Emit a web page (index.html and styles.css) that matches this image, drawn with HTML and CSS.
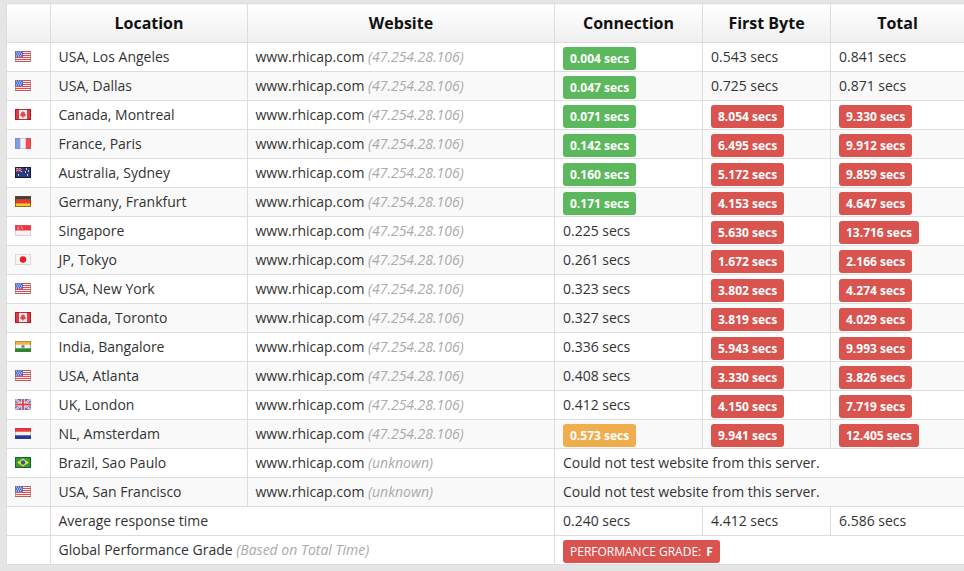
FILE: index.html
```html
<!DOCTYPE html>
<html lang="en">
<head>
<meta charset="utf-8">
<title>Response time</title>
<link rel="stylesheet" href="styles.css">
</head>
<body>
<svg class="defs" width="0" height="0" aria-hidden="true">
<defs>
<symbol id="us" viewBox="0 0 16 11"><rect width="16" height="11" fill="#f7efef"/><path d="M0 .5h16M0 2.500h16M0 4.500h16M0 6.500h16M0 8.500h16M0 10.500h16" stroke="#ee4a4e" stroke-width="1"/><rect width="8" height="6" fill="#4d6fdc"/><path d="M1 1h1M3 1h1M5 1h1M2 3h1M4 3h1M6 3h1M1 5h1M3 5h1M5 5h1" stroke="#e6ecff" stroke-width="1"/><rect x=".5" y=".5" width="15" height="10" fill="none" stroke="#8a6d6d" stroke-opacity=".55"/></symbol>
<symbol id="ca" viewBox="0 0 16 11"><rect width="16" height="11" fill="#f6eeee"/><rect width="4" height="11" fill="#e03a40"/><rect x="12" width="4" height="11" fill="#e03a40"/><path d="M8 2l1 1.400 1-.4-.3 2 1.300-.3-.6 1.500.6.500-2.500 1-.3 1.300h-.4l-.3-1.300-2.500-1 .6-.5-.6-1.500 1.300.3-.3-2 1 .4z" fill="#dc474c"/><rect x=".5" y=".5" width="15" height="10" fill="none" stroke="#b01015" stroke-opacity=".85"/></symbol>
<symbol id="fr" viewBox="0 0 16 11"><rect width="16" height="11" fill="#f2f2f4"/><rect width="5.300" height="11" fill="#7f9de4"/><rect x="10.700" width="5.300" height="11" fill="#f4494d"/><rect x=".5" y=".5" width="15" height="10" fill="none" stroke="#666" stroke-opacity=".25"/></symbol>
<symbol id="au" viewBox="0 0 16 11"><rect width="16" height="11" fill="#2f3a80"/><path d="M0 0l7 5M7 0L0 5" stroke="#e6d0d8" stroke-width="1"/><path d="M3.500 0v5M0 2.500h7" stroke="#d8404a" stroke-width="1.200"/><path d="M3 8h1M11 2h1M13 4h1M10 5h1M12 8h1" stroke="#f2f2ff" stroke-width="1.300"/><rect x=".5" y=".5" width="15" height="10" fill="none" stroke="#0b1030" stroke-opacity=".8"/></symbol>
<symbol id="de" viewBox="0 0 16 11"><rect width="16" height="11" fill="#f4c92a"/><rect width="16" height="3.700" fill="#4a3d3d"/><rect y="3.700" width="16" height="3.700" fill="#e8392f"/><rect x=".5" y=".5" width="15" height="10" fill="none" stroke="#5c4a20" stroke-opacity=".7"/></symbol>
<symbol id="sg" viewBox="0 0 16 11"><rect width="16" height="11" fill="#f6f2f2"/><rect width="16" height="5.500" fill="#f0363c"/><circle cx="4" cy="3" r="1.600" fill="#fde"/><circle cx="4.700" cy="3" r="1.400" fill="#f0363c"/><path d="M6 2h1M7 3.500h1" stroke="#fde" stroke-width=".9"/><rect x=".5" y=".5" width="15" height="10" fill="none" stroke="#999" stroke-opacity=".3"/></symbol>
<symbol id="jp" viewBox="0 0 16 11"><rect width="16" height="11" fill="#f6f4f4"/><circle cx="8" cy="5.500" r="3.200" fill="#ea1c24"/><rect x=".5" y=".5" width="15" height="10" fill="none" stroke="#999" stroke-opacity=".3"/></symbol>
<symbol id="in" viewBox="0 0 16 11"><rect width="16" height="11" fill="#f3f3f3"/><rect width="16" height="3.700" fill="#f6b23c"/><rect y="7.300" width="16" height="3.700" fill="#238a2e"/><circle cx="8" cy="5.500" r="1.700" fill="#7d8ab4"/><rect x=".5" y=".5" width="15" height="10" fill="none" stroke="#6b6b30" stroke-opacity=".5"/></symbol>
<symbol id="gb" viewBox="0 0 16 11"><rect width="16" height="11" fill="#5a70c4"/><path d="M0 0l16 11M16 0L0 11" stroke="#f2eef2" stroke-width="2"/><path d="M0 0l16 11M16 0L0 11" stroke="#e0505a" stroke-width=".7"/><path d="M8 0v11M0 5.500h16" stroke="#f2eef2" stroke-width="3.400"/><path d="M8 0v11M0 5.500h16" stroke="#e0404a" stroke-width="1.800"/></symbol>
<symbol id="nl" viewBox="0 0 16 11"><rect width="16" height="11" fill="#f6f2f2"/><rect width="16" height="3.700" fill="#f0343c"/><rect y="7.300" width="16" height="3.700" fill="#27379a"/><rect x=".5" y=".5" width="15" height="10" fill="none" stroke="#444" stroke-opacity=".25"/></symbol>
<symbol id="br" viewBox="0 0 16 11"><rect width="16" height="11" fill="#2f9a3c"/><path d="M8 1.500l6 4-6 4-6-4z" fill="#f0dc3a"/><circle cx="8" cy="5.500" r="2.200" fill="#2f5ca8"/><rect x=".5" y=".5" width="15" height="10" fill="none" stroke="#14531e" stroke-opacity=".8"/></symbol>
</defs>
</svg>
<table class="results">
<colgroup><col class="c-flag"><col class="c-loc"><col class="c-web"><col class="c-conn"><col class="c-byte"><col class="c-total"></colgroup>
<thead><tr><th></th><th>Location</th><th>Website</th><th>Connection</th><th>First Byte</th><th>Total</th></tr></thead>
<tbody>
<tr><td><svg class="flag"><use href="#us"/></svg></td><td>USA, Los Angeles</td><td>www.rhicap.com <em>(47.254.28.106)</em></td><td><span class="badge ok">0.004 secs</span></td><td>0.543 secs</td><td>0.841 secs</td></tr>
<tr><td><svg class="flag"><use href="#us"/></svg></td><td>USA, Dallas</td><td>www.rhicap.com <em>(47.254.28.106)</em></td><td><span class="badge ok">0.047 secs</span></td><td>0.725 secs</td><td>0.871 secs</td></tr>
<tr><td><svg class="flag"><use href="#ca"/></svg></td><td>Canada, Montreal</td><td>www.rhicap.com <em>(47.254.28.106)</em></td><td><span class="badge ok">0.071 secs</span></td><td><span class="badge bad">8.054 secs</span></td><td><span class="badge bad">9.330 secs</span></td></tr>
<tr><td><svg class="flag"><use href="#fr"/></svg></td><td>France, Paris</td><td>www.rhicap.com <em>(47.254.28.106)</em></td><td><span class="badge ok">0.142 secs</span></td><td><span class="badge bad">6.495 secs</span></td><td><span class="badge bad">9.912 secs</span></td></tr>
<tr><td><svg class="flag"><use href="#au"/></svg></td><td>Australia, Sydney</td><td>www.rhicap.com <em>(47.254.28.106)</em></td><td><span class="badge ok">0.160 secs</span></td><td><span class="badge bad">5.172 secs</span></td><td><span class="badge bad">9.859 secs</span></td></tr>
<tr><td><svg class="flag"><use href="#de"/></svg></td><td>Germany, Frankfurt</td><td>www.rhicap.com <em>(47.254.28.106)</em></td><td><span class="badge ok">0.171 secs</span></td><td><span class="badge bad">4.153 secs</span></td><td><span class="badge bad">4.647 secs</span></td></tr>
<tr><td><svg class="flag"><use href="#sg"/></svg></td><td>Singapore</td><td>www.rhicap.com <em>(47.254.28.106)</em></td><td>0.225 secs</td><td><span class="badge bad">5.630 secs</span></td><td><span class="badge bad">13.716 secs</span></td></tr>
<tr><td><svg class="flag"><use href="#jp"/></svg></td><td>JP, Tokyo</td><td>www.rhicap.com <em>(47.254.28.106)</em></td><td>0.261 secs</td><td><span class="badge bad">1.672 secs</span></td><td><span class="badge bad">2.166 secs</span></td></tr>
<tr><td><svg class="flag"><use href="#us"/></svg></td><td>USA, New York</td><td>www.rhicap.com <em>(47.254.28.106)</em></td><td>0.323 secs</td><td><span class="badge bad">3.802 secs</span></td><td><span class="badge bad">4.274 secs</span></td></tr>
<tr><td><svg class="flag"><use href="#ca"/></svg></td><td>Canada, Toronto</td><td>www.rhicap.com <em>(47.254.28.106)</em></td><td>0.327 secs</td><td><span class="badge bad">3.819 secs</span></td><td><span class="badge bad">4.029 secs</span></td></tr>
<tr><td><svg class="flag"><use href="#in"/></svg></td><td>India, Bangalore</td><td>www.rhicap.com <em>(47.254.28.106)</em></td><td>0.336 secs</td><td><span class="badge bad">5.943 secs</span></td><td><span class="badge bad">9.993 secs</span></td></tr>
<tr><td><svg class="flag"><use href="#us"/></svg></td><td>USA, Atlanta</td><td>www.rhicap.com <em>(47.254.28.106)</em></td><td>0.408 secs</td><td><span class="badge bad">3.330 secs</span></td><td><span class="badge bad">3.826 secs</span></td></tr>
<tr><td><svg class="flag"><use href="#gb"/></svg></td><td>UK, London</td><td>www.rhicap.com <em>(47.254.28.106)</em></td><td>0.412 secs</td><td><span class="badge bad">4.150 secs</span></td><td><span class="badge bad">7.719 secs</span></td></tr>
<tr><td><svg class="flag"><use href="#nl"/></svg></td><td>NL, Amsterdam</td><td>www.rhicap.com <em>(47.254.28.106)</em></td><td><span class="badge warn">0.573 secs</span></td><td><span class="badge bad">9.941 secs</span></td><td><span class="badge bad">12.405 secs</span></td></tr>
<tr><td><svg class="flag"><use href="#br"/></svg></td><td>Brazil, Sao Paulo</td><td>www.rhicap.com <em>(unknown)</em></td><td colspan="3">Could not test website from this server.</td></tr>
<tr><td><svg class="flag"><use href="#us"/></svg></td><td>USA, San Francisco</td><td>www.rhicap.com <em>(unknown)</em></td><td colspan="3">Could not test website from this server.</td></tr>
<tr class="summary"><td></td><td colspan="2">Average response time</td><td>0.240 secs</td><td>4.412 secs</td><td>6.586 secs</td></tr>
<tr class="summary"><td></td><td colspan="2">Global Performance Grade <em>(Based on Total Time)</em></td><td colspan="3"><span class="badge bad grade">PERFORMANCE GRADE: <b>F</b></span></td></tr>
</tbody>
</table>
</body>
</html>
```
FILE: styles.css
```css
html, body { margin: 0; height: 100%; overflow: hidden; }
body { background: #e5e5e5; padding: 3px 0 0 6px; box-sizing: border-box; font-family: "Open Sans", sans-serif; font-size: 14px; color: #333; }
.defs { position: absolute; }
.results { border-collapse: collapse; table-layout: fixed; width: 958px; background: #fff; }
.c-flag { width: 44px; }
.c-loc { width: 197px; }
.c-web { width: 307px; }
.c-conn { width: 148px; }
.c-byte { width: 128px; }
.c-total { width: 134px; }
th, td { border: 1px solid #ddd; padding: 0 8px; text-align: left; white-space: nowrap; overflow: hidden; }
thead tr { height: 39px; }
th { font-size: 16px; font-weight: 700; color: #111; text-align: center; background: linear-gradient(#fff, #efefef); }
tbody tr { height: 29px; }
td { line-height: 20px; }
td:first-child { padding-bottom: 1px; }
td:nth-child(2) { padding-left: 7.5px; }
tbody tr:not(.summary) td:nth-child(3) { padding-left: 7.5px; }
tbody tr:nth-child(even) td { background: #f9f9f9; }
tbody tr.summary td { background: #fff; }
em { color: #aaa; font-style: italic; }
.flag { display: block; width: 16px; height: 11px; }
.badge { display: inline-block; height: 23px; line-height: 23px; padding: 0 7px; margin: 3px 0 0; border-radius: 3px; color: #fff; font-size: 12px; font-weight: 700; vertical-align: middle; }
.ok { background: #5cb85c; }
.bad { background: #d9534f; }
.warn { background: #f0ad4e; }
.grade { font-weight: 400; }
.grade b { font-weight: 700; margin-left: 2px; }
```
